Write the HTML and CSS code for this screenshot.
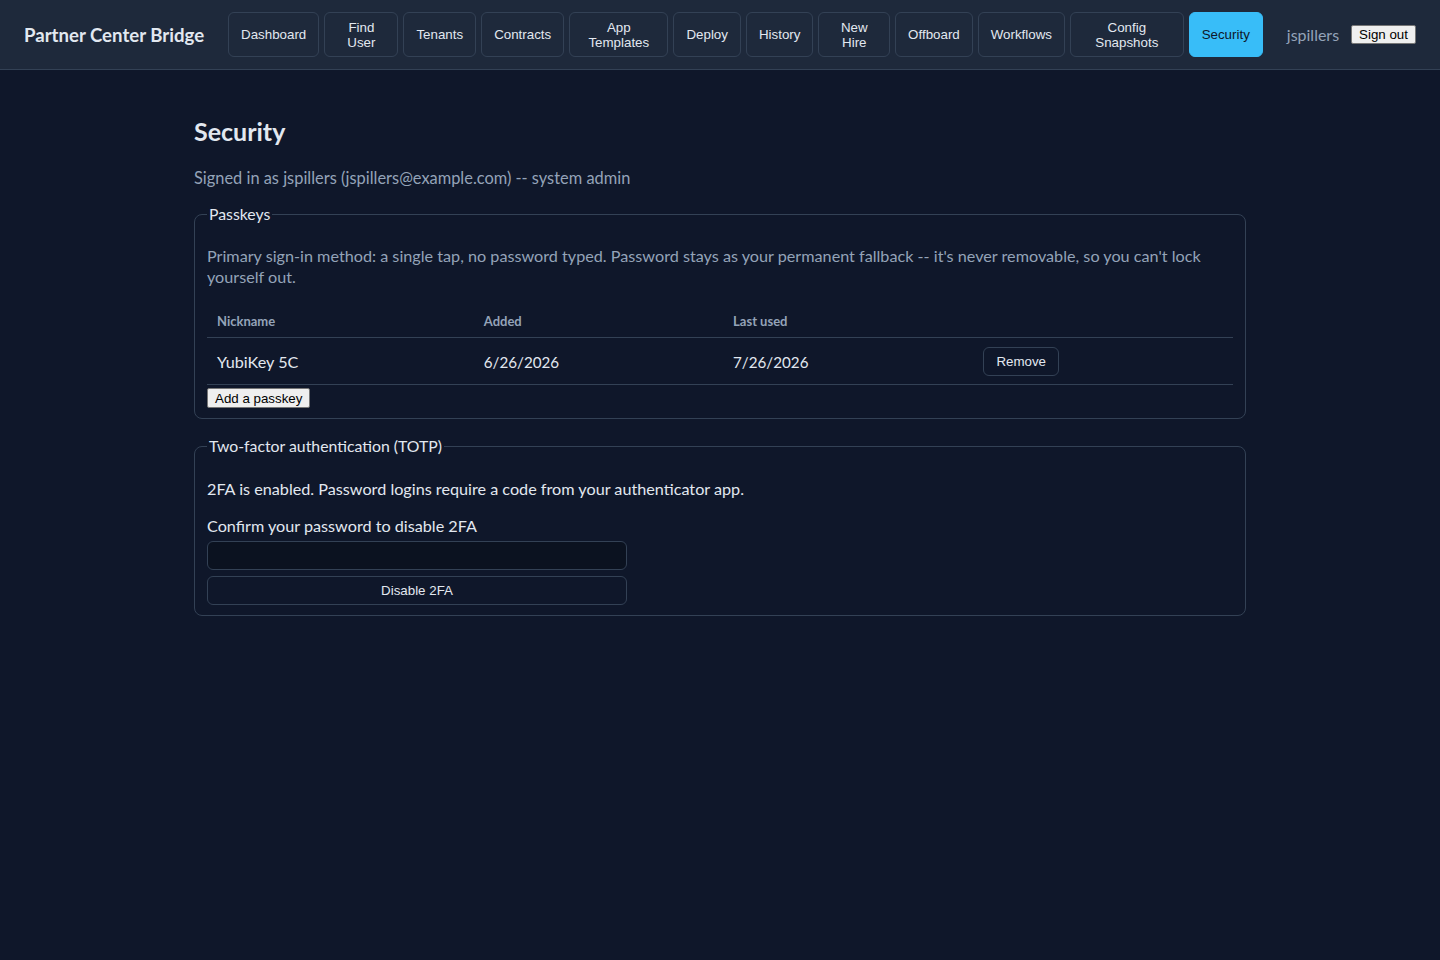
FILE: index.html
```html
<!DOCTYPE html>
<html lang="en">
<head>
    <meta charset="UTF-8">
    <meta name="viewport" content="width=device-width, initial-scale=1.0">
    <title>Security - Partner Center Bridge</title>
    <link rel="stylesheet" href="styles.css">
</head>
<body>
    <header class="topbar">
        <div class="brand">Partner Center Bridge</div>
        <nav class="nav">
            <a class="nav-btn">Dashboard</a>
            <a class="nav-btn">Find User</a>
            <a class="nav-btn">Tenants</a>
            <a class="nav-btn">Contracts</a>
            <a class="nav-btn">App Templates</a>
            <a class="nav-btn">Deploy</a>
            <a class="nav-btn">History</a>
            <a class="nav-btn">New Hire</a>
            <a class="nav-btn">Offboard</a>
            <a class="nav-btn">Workflows</a>
            <a class="nav-btn">Config Snapshots</a>
            <a class="nav-btn active">Security</a>
        </nav>
        <div class="user-box">
            <span class="username">jspillers</span>
            <button class="plain-btn">Sign out</button>
        </div>
    </header>

    <main class="page">
        <h1>Security</h1>
        <p class="subtitle">Signed in as jspillers (jspillers@example.com) -- system admin</p>

        <fieldset class="panel">
            <legend>Passkeys</legend>
            <p class="muted">Primary sign-in method: a single tap, no password typed. Password stays as your permanent fallback -- it's never removable, so you can't lock yourself out.</p>
            <table class="keys">
                <thead>
                    <tr>
                        <th class="col-name">Nickname</th>
                        <th class="col-added">Added</th>
                        <th class="col-used">Last used</th>
                        <th></th>
                    </tr>
                </thead>
                <tbody>
                    <tr>
                        <td>YubiKey 5C</td>
                        <td class="date">6/26/2026</td>
                        <td class="date">7/26/2026</td>
                        <td><button class="dark-btn">Remove</button></td>
                    </tr>
                </tbody>
            </table>
            <button class="plain-btn add-btn">Add a passkey</button>
        </fieldset>

        <fieldset class="panel">
            <legend>Two-factor authentication (TOTP)</legend>
            <p class="status">2FA is enabled. Password logins require a code from your authenticator app.</p>
            <label class="field-label" for="pw">Confirm your password to disable 2FA</label>
            <input class="field" id="pw" type="password">
            <button class="dark-btn wide-btn">Disable 2FA</button>
        </fieldset>
    </main>
</body>
</html>
```

FILE: styles.css
```css
body {
    margin: 0;
    background-color: #0f172a;
    color: #e2e8f0;
    font-family: Lato, "Noto Sans", sans-serif;
    font-size: 16.2px;
}
.topbar {
    display: flex;
    align-items: center;
    gap: 24px;
    padding: 12px 24px;
    background-color: #1e293b;
    border-bottom: 1px solid #334155;
}
.brand {
    flex-shrink: 0;
    font-size: 18.6px;
    font-weight: 700;
    white-space: nowrap;
}
.nav {
    display: flex;
    gap: 5px;
    flex: 1;
    min-width: 0;
}
.nav-btn {
    padding: 6.5px 12px;
    border: 1px solid #334155;
    border-radius: 6px;
    font-family: "Liberation Sans", Arial, sans-serif;
    font-size: 13.33px;
    line-height: 15px;
    text-align: center;
    color: #e2e8f0;
    display: flex;
    align-items: center;
    justify-content: center;
    cursor: pointer;
}
.nav-btn.active {
    background-color: #38bdf8;
    border-color: #38bdf8;
    color: #0f172a;
}
.user-box {
    display: flex;
    align-items: center;
    gap: 12px;
    flex-shrink: 0;
}
.username {
    color: #94a3b8;
    font-size: 16px;
}
.plain-btn {
    font-family: "Liberation Sans", Arial, sans-serif;
    font-size: 13.33px;
    padding: 1px 7px;
    background-color: #efefef;
    color: #000;
    border: 1px solid #767676;
    border-radius: 2px;
}
.page {
    max-width: 1052px;
    margin: 0 auto;
    padding: 45px 24px;
}
h1 {
    margin: 0;
    font-size: 25px;
    line-height: 32px;
}
.subtitle {
    margin: 19px 0 12px;
    color: #94a3b8;
    font-size: 16.4px;
    line-height: 24px;
}
.panel {
    margin: 0 0 15px;
    padding: 0 12px 10px;
    border: 1px solid #334155;
    border-radius: 8px;
}
.panel legend {
    padding: 0 2px;
    font-size: 15.8px;
    line-height: 24px;
}
.muted {
    margin: 19px 0 17px;
    color: #94a3b8;
    font-size: 16.2px;
    line-height: 21px;
}
.keys {
    width: 100%;
    border-collapse: collapse;
}
.keys th {
    text-align: left;
    padding: 7px 10px 6px;
    font-size: 13px;
    line-height: 20px;
    color: #94a3b8;
    border-bottom: 1px solid #334155;
}
.keys td {
    padding: 9px 10px 8px;
    border-bottom: 1px solid #334155;
}
.keys .date {
    font-size: 15.2px;
}
.col-name {
    width: 26%;
}
.col-added {
    width: 24.3%;
}
.col-used {
    width: 24.4%;
}
.dark-btn {
    font-family: "Liberation Sans", Arial, sans-serif;
    font-size: 13.33px;
    height: 29px;
    padding: 0 12px;
    background-color: #0f172a;
    color: #e2e8f0;
    border: 1px solid #334155;
    border-radius: 6px;
    cursor: pointer;
}
.add-btn {
    display: block;
    height: 20px;
    margin-top: 3px;
}
.status {
    margin: 19px 0 13px;
    line-height: 24px;
}
.field-label {
    display: block;
    line-height: 24px;
    margin-bottom: 3px;
}
.field {
    display: block;
    box-sizing: border-box;
    width: 420px;
    height: 29px;
    background-color: #0b1220;
    border: 1px solid #334155;
    border-radius: 6px;
    color: #e2e8f0;
}
.wide-btn {
    display: block;
    width: 420px;
    margin-top: 6px;
}
```
